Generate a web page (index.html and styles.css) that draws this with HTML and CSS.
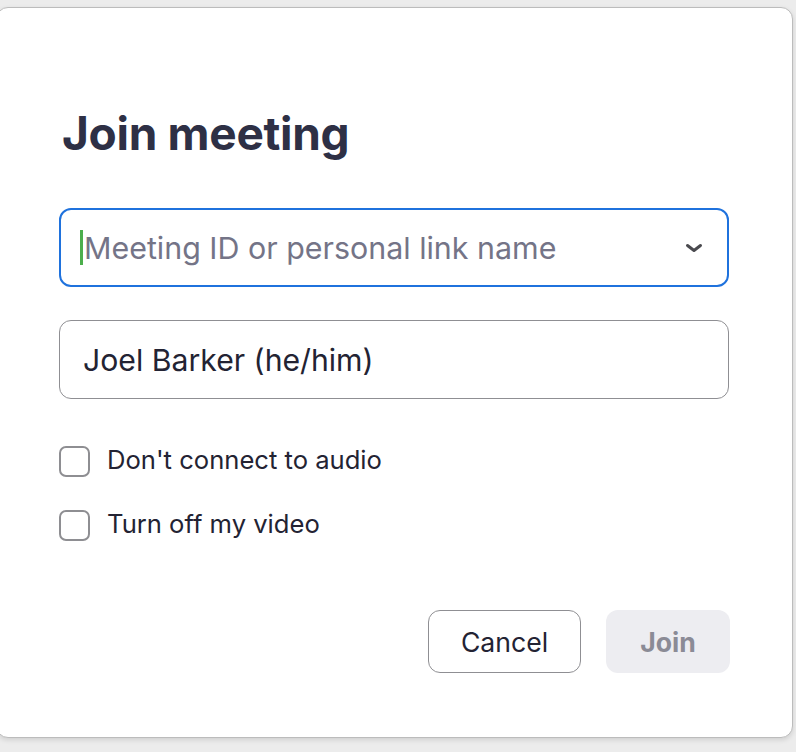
FILE: index.html
```html
<!DOCTYPE html>
<html>
<head>
<meta charset="utf-8">
<link rel="stylesheet" href="styles.css">
</head>
<body>
<div class="dialog">
  <h1 class="title">Join meeting</h1>
  <div class="field field-active">
    <span class="caret"></span>
    <span class="placeholder">Meeting ID or personal link name</span>
    <svg class="chevron" width="18" height="10" viewBox="0 0 18 10"><path d="M2.5 2.5 L9 7.5 L15.5 2.5" fill="none" stroke="#4a4a4f" stroke-width="3" stroke-linecap="round" stroke-linejoin="round"/></svg>
  </div>
  <div class="field field-name">
    <span class="value">Joel Barker (he/him)</span>
  </div>
  <div class="options">
    <label class="option"><span class="box"></span><span class="label">Don't connect to audio</span></label>
    <label class="option"><span class="box"></span><span class="label">Turn off my video</span></label>
  </div>
  <div class="actions">
    <button class="btn btn-cancel">Cancel</button>
    <button class="btn btn-join">Join</button>
  </div>
</div>
</body>
</html>
```
FILE: styles.css
```css
html, body {
  margin: 0;
  padding: 0;
}
body {
  background: #ececec;
  padding-top: 7px;
  height: 752px;
  box-sizing: border-box;
  overflow: hidden;
  font-family: "Inter", "Liberation Sans", sans-serif;
}
.dialog {
  box-sizing: border-box;
  width: 797px;
  height: 731px;
  margin-left: -4px;
  background: #ffffff;
  border: 1px solid #bcbcbc;
  border-radius: 12px;
  box-shadow: 0 2px 5px rgba(0, 0, 0, 0.12);
  padding: 101px 0 0 62px;
}
.title {
  margin: 0 0 0 3px;
  font-size: 46px;
  line-height: 48px;
  font-weight: 700;
  color: #2e3045;
  letter-spacing: -0.3px;
}
.field {
  box-sizing: border-box;
  width: 670px;
  height: 79px;
  border-radius: 12px;
  display: flex;
  align-items: center;
}
.field-active {
  margin-top: 51px;
  border: 2px solid #1f72dd;
  padding: 0 24px 0 19px;
}
.caret {
  width: 3px;
  height: 35px;
  background: #4cae4c;
  margin-right: 1px;
}
.placeholder {
  flex: 1;
  font-size: 30.4px;
  color: #747487;
}
.chevron {
  display: block;
}
.field-name {
  margin-top: 33px;
  border: 1.5px solid #8f8f93;
  padding: 0 0 0 23px;
}
.value {
  font-size: 30.2px;
  color: #232333;
}
.options {
  margin-top: 47px;
  display: flex;
  flex-direction: column;
  gap: 33px;
}
.option {
  display: flex;
  align-items: center;
  gap: 17px;
}
.box {
  box-sizing: border-box;
  width: 31px;
  height: 31px;
  border: 2px solid #8e8e92;
  border-radius: 7px;
}
.label {
  font-size: 25.6px;
  line-height: 28px;
  color: #232333;
  margin-top: -4px;
}
.actions {
  margin-top: 69px;
  width: 671px;
  display: flex;
  justify-content: flex-end;
  gap: 25px;
}
.btn {
  box-sizing: border-box;
  height: 63px;
  border-radius: 12px;
  font-family: "Inter", "Liberation Sans", sans-serif;
  font-size: 26.6px;
}
.btn-cancel {
  width: 153px;
  background: #ffffff;
  border: 1.5px solid #8f8f93;
  color: #232333;
}
.btn-join {
  width: 124px;
  background: #ededf1;
  border: none;
  color: #8b8b96;
  font-weight: 700;
}
```
